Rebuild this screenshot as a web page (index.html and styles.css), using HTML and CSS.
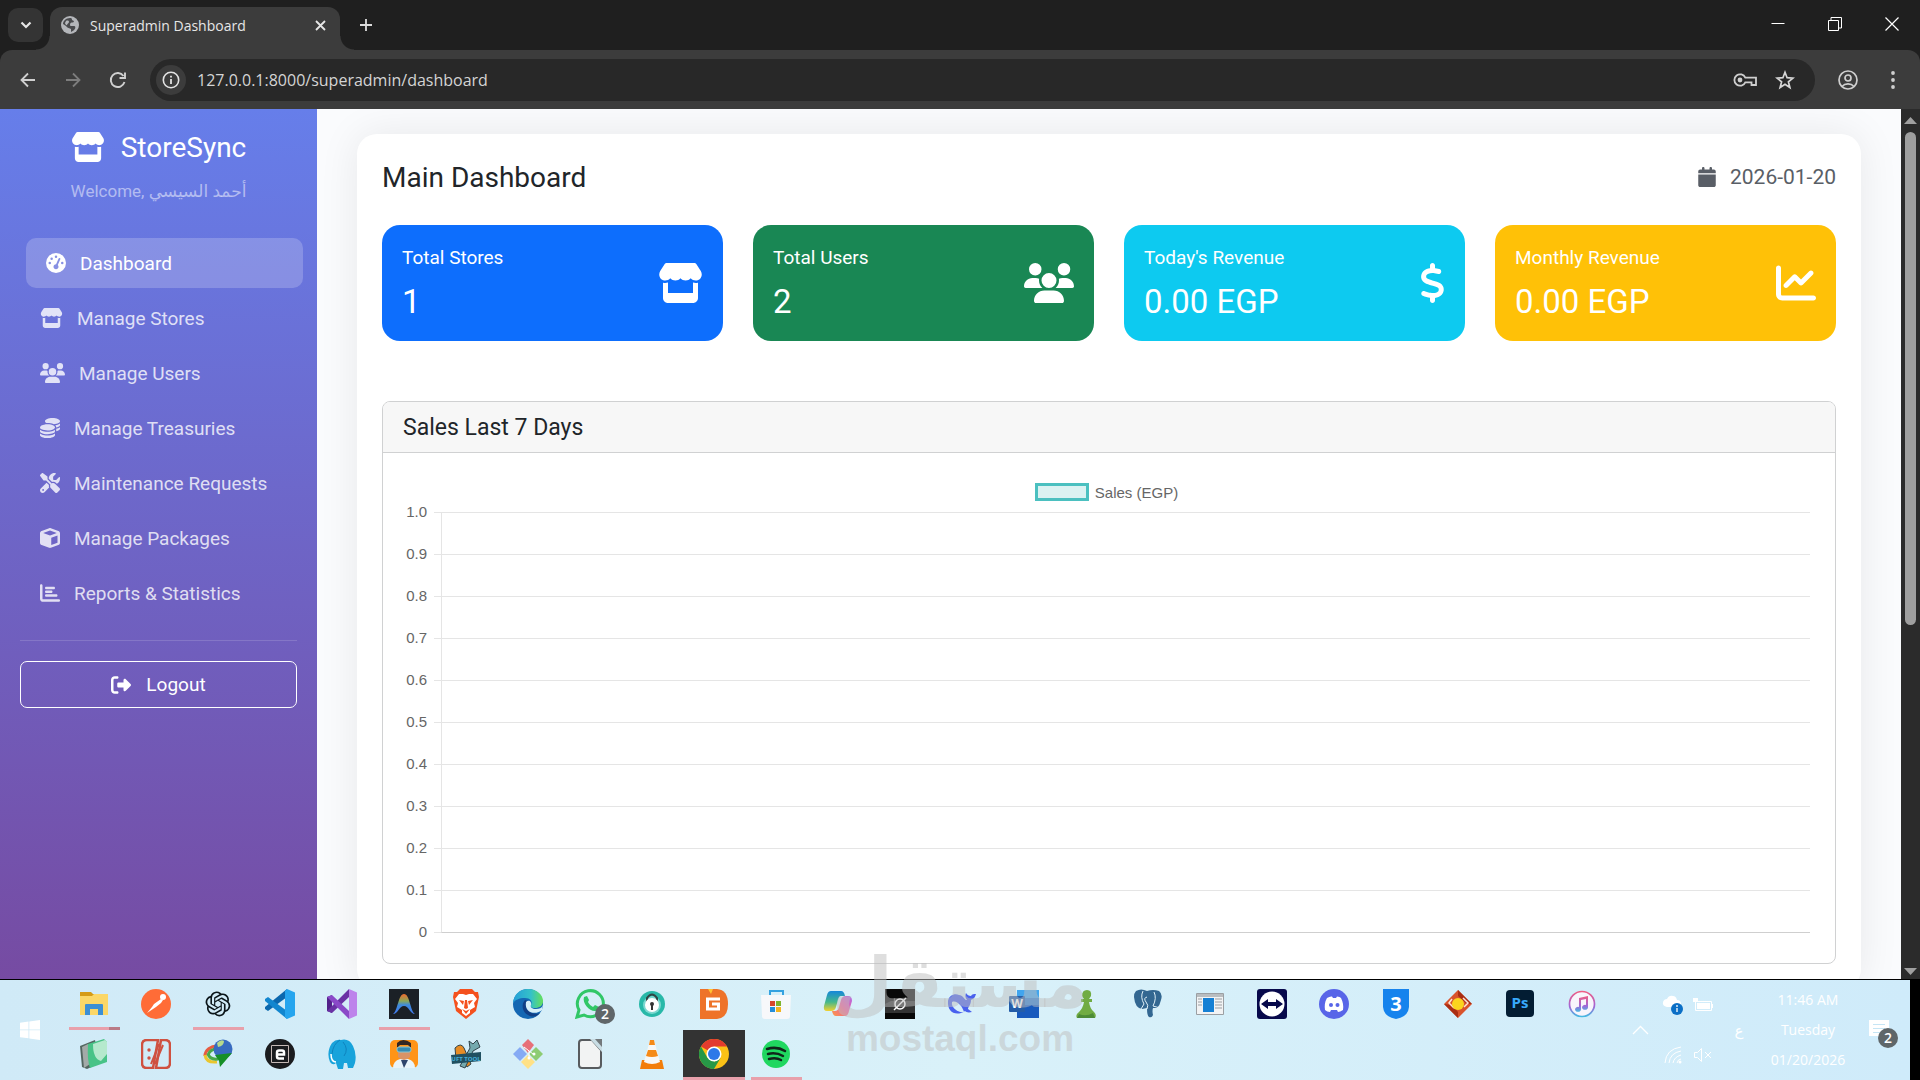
FILE: index.html
```html
<!DOCTYPE html>
<html lang="en">

<head>
    <meta charset="UTF-8">
    <meta name="viewport" content="width=device-width, initial-scale=1.0">
    <title>Superadmin Dashboard</title>
    <link rel="stylesheet" href="styles.css">
</head>

<body>

    <!-- shared icons -->
    <svg class="sprite" aria-hidden="true">
        <symbol id="store" viewBox="0 0 576 512"><path d="M547.6 103.8L490.3 13.1C485.2 5 476.1 0 466.4 0H109.6C99.9 0 90.8 5 85.7 13.1L28.3 103.8c-29.6 46.8-3.4 111.9 51.9 119.4c4 .5 8.1 .8 12.1 .8c26.1 0 49.3-11.4 65.2-29c15.9 17.6 39.1 29 65.2 29c26.1 0 49.3-11.4 65.2-29c15.9 17.6 39.1 29 65.2 29c26.2 0 49.3-11.4 65.2-29c16 17.6 39.1 29 65.2 29c4.1 0 8.1-.3 12.1-.8c55.5-7.4 81.8-72.5 52.1-119.4zM499.7 254.9l-.1 0c-5.3 .7-10.7 1.1-16.2 1.1c-12.4 0-24.3-1.9-35.4-5.3V384H128V250.6c-11.2 3.5-23.2 5.4-35.6 5.4c-5.5 0-11-.4-16.3-1.1l-.1 0c-4.1-.6-8.1-1.3-12-2.3V384v64c0 35.3 28.7 64 64 64H448c35.3 0 64-28.7 64-64V384 252.6c-4 1-8 1.8-12.3 2.3z"/></symbol>
        <symbol id="users" viewBox="0 0 640 512"><path d="M144 0a80 80 0 1 1 0 160A80 80 0 1 1 144 0zM512 0a80 80 0 1 1 0 160A80 80 0 1 1 512 0zM0 298.7C0 239.8 47.8 192 106.7 192h42.7c15.9 0 31 3.5 44.6 9.7c-1.3 7.2-1.9 14.7-1.9 22.3c0 38.2 16.8 72.5 43.3 96c-.2 0-.4 0-.7 0H21.3C9.6 320 0 310.4 0 298.7zM405.3 320c-.2 0-.4 0-.7 0c26.6-23.5 43.3-57.8 43.3-96c0-7.6-.7-15-1.9-22.3c13.6-6.3 28.7-9.7 44.6-9.7h42.7C592.2 192 640 239.8 640 298.7c0 11.8-9.6 21.3-21.3 21.3H405.3zM224 224a96 96 0 1 1 192 0 96 96 0 1 1 -192 0zM128 485.3C128 411.7 187.7 352 261.3 352H378.7C452.3 352 512 411.7 512 485.3c0 14.7-11.9 26.7-26.7 26.7H154.7c-14.7 0-26.7-11.9-26.7-26.7z"/></symbol>
    </svg>

    <header class="browser">
        <div class="tabstrip">
            <button class="tab-search" aria-label="Search tabs"><svg width="12" height="8" viewBox="0 0 12 8"><path d="M1.500 1.500 6 6l4.500-4.500" fill="none" stroke="#e6e6e6" stroke-width="2.200"/></svg></button>
            <div class="tab">
                <svg width="18" height="18" viewBox="0 0 18 18"><circle cx="9" cy="9" r="9" fill="#b4b6ba"/><path d="M9 2c3 0 1 2 3 2.500 1.500.5 1 2-.5 2S9 7 9 9s3 .5 4.500 1 1 3-1 4.500L10 16v-3c-1-1-4-1-5-3L2 8c0-3 3-6 7-6z" fill="#494a4d"/><path d="M5 5c2-1 3 0 3 1S6 8 6 9 4 8 4 7z" fill="#b4b6ba"/></svg>
                <span class="tab-title">Superadmin Dashboard</span>
                <button class="tab-close" aria-label="Close tab"><svg width="11" height="11" viewBox="0 0 11 11"><path d="M1 1l9 9M10 1l-9 9" stroke="#e6e6e6" stroke-width="1.800"/></svg></button>
            </div>
            <button class="tab-new" aria-label="New tab"><svg width="14" height="14" viewBox="0 0 14 14"><path d="M7 1v12M1 7h12" stroke="#dcdcdc" stroke-width="1.800"/></svg></button>
            <div class="window-controls">
                <button aria-label="Minimize"><svg width="14" height="14" viewBox="0 0 14 14"><path d="M.5 6.500h13" stroke="#fff"/></svg></button>
                <button aria-label="Restore"><svg width="14" height="14" viewBox="0 0 14 14"><path d="M.5 3.500h10v10H.5zM3 3V.5h10.500V11H11" fill="none" stroke="#fff"/></svg></button>
                <button aria-label="Close"><svg width="14" height="14" viewBox="0 0 14 14"><path d="M.5.5l13 13M13.500.5l-13 13" stroke="#fff" stroke-width="1.200"/></svg></button>
            </div>
        </div>
        <div class="toolbar">
            <button class="tool" aria-label="Back"><svg width="16" height="16" viewBox="0 0 16 16"><path d="M15 8H2M8 1.500 1.500 8 8 14.500" fill="none" stroke="#d0d0d0" stroke-width="1.800"/></svg></button>
            <button class="tool" aria-label="Forward"><svg width="16" height="16" viewBox="0 0 16 16"><path d="M1 8h13M8 1.500 14.500 8 8 14.500" fill="none" stroke="#7d7d7d" stroke-width="1.800"/></svg></button>
            <button class="tool" aria-label="Reload"><svg width="18" height="18" viewBox="0 0 18 18"><path d="M15.500 11A7 7 0 1 1 14.500 5M16 1.500V7h-5.500" fill="none" stroke="#d0d0d0" stroke-width="1.900"/></svg></button>
            <div class="omnibox">
                <button class="site-info" aria-label="Site information"><svg width="18" height="18" viewBox="0 0 18 18"><circle cx="9" cy="9" r="7.700" fill="none" stroke="#e3e3e3" stroke-width="1.600"/><path d="M9 8v5M9 4.700v1.900" stroke="#e3e3e3" stroke-width="1.800"/></svg></button>
                <input class="url" type="text" aria-label="Address" value="127.0.0.1:8000/superadmin/dashboard">
                <button class="tool" aria-label="Passwords"><svg width="24" height="14" viewBox="0 0 24 14"><path d="M12.300 4.700H23V12h-4.500V9.300h-6.200a5.700 5.700 0 1 1 0-4.600z" fill="none" stroke="#cfcfcf" stroke-width="1.800"/><circle cx="7" cy="7" r="2.400" fill="#cfcfcf"/></svg></button>
                <button class="tool" aria-label="Bookmark"><svg width="20" height="20" viewBox="0 0 20 20"><path d="M10 2.300l2.100 5.400 5.800.4-4.500 3.700 1.500 5.700L10 14.300l-4.900 3.200 1.500-5.700L2.100 8.100l5.800-.4z" fill="none" stroke="#d6d6d6" stroke-width="1.700"/></svg></button>
            </div>
            <button class="tool" aria-label="Profile"><svg width="20" height="20" viewBox="0 0 20 20"><g fill="none" stroke="#cfcfcf" stroke-width="1.700"><circle cx="10" cy="10" r="9"/><circle cx="10" cy="8" r="3"/><path d="M4 16.500c3-3.500 9-3.500 12 0"/></g></svg></button>
            <button class="tool" aria-label="Menu"><svg width="4" height="18" viewBox="0 0 4 18"><g fill="#cfcfcf"><circle cx="2" cy="2" r="1.900"/><circle cx="2" cy="9" r="1.900"/><circle cx="2" cy="16" r="1.900"/></g></svg></button>
        </div>
    </header>

    <div class="page">
        <aside class="sidebar">
            <div class="brand"><svg width="34" height="30"><use href="#store"/></svg><span>StoreSync</span></div>
            <p class="welcome">Welcome, <span dir="rtl">أحمد السيسي</span></p>
            <nav>
                <a href="#" class="nav-link active"><svg width="20" height="20" viewBox="0 0 512 512"><path d="M0 256a256 256 0 1 1 512 0A256 256 0 1 1 0 256zM288 96a32 32 0 1 0 -64 0 32 32 0 1 0 64 0zM256 416c35.300 0 64-28.700 64-64c0-17.400-6.900-33.100-18.100-44.600L366 161.700c5.300-12.100-.2-26.300-12.300-31.600s-26.300 .2-31.600 12.300L257.900 288c-.6 0-1.300 0-1.900 0c-35.300 0-64 28.700-64 64s28.700 64 64 64zM176 144a32 32 0 1 0 -64 0 32 32 0 1 0 64 0zM96 288a32 32 0 1 0 0-64 32 32 0 1 0 0 64zm352-32a32 32 0 1 0 -64 0 32 32 0 1 0 64 0z"/></svg>Dashboard</a>
                <a href="#" class="nav-link"><svg width="23" height="20"><use href="#store"/></svg>Manage Stores</a>
                <a href="#" class="nav-link"><svg width="25" height="20"><use href="#users"/></svg>Manage Users</a>
                <a href="#" class="nav-link"><svg width="20" height="20" viewBox="0 0 512 512"><path d="M512 80c0 18-14.300 34.600-38.400 48c-29.100 16.100-72.500 27.500-122.300 30.900c-3.700-1.800-7.400-3.500-11.300-5C300.600 137.400 248.200 128 192 128c-8.300 0-16.400 .2-24.500 .6l-1.100-.6C142.300 114.600 128 98 128 80c0-44.200 86-80 192-80S512 35.800 512 80zM160.700 161.100c10.200-.7 20.700-1.100 31.300-1.100c62.200 0 117.400 12.300 152.500 31.400C369.300 204.900 384 221.700 384 240c0 4-.7 7.900-2.100 11.700c-4.600 13.200-17 25.300-35 35.500c-.4 .2-.8 .4-1.300 .7c-35 19.400-90.800 32-153.600 32c-59.600 0-112.900-11.300-148.200-29.100c-1.900-.9-3.700-1.900-5.500-2.900C14.300 274.600 0 258 0 240c0-34.800 53.400-64.500 128-75.400c10.500-1.500 21.400-2.700 32.700-3.500zM416 240c0-21.900-10.600-39.900-24.100-53.400c28.300-4.400 54.200-11.400 76.200-20.500c16.300-6.800 31.500-15.200 43.900-25.500V176c0 19.300-16.500 37.100-43.800 50.900c-14.600 7.400-32.400 13.700-52.400 18.500c.1-1.800 .2-3.500 .2-5.300zm-32 96c0 18-14.300 34.600-38.400 48c-1.800 1-3.600 1.900-5.500 2.900C304.900 404.700 251.600 416 192 416c-62.800 0-118.600-12.600-153.600-32C14.300 370.600 0 354 0 336V300.600c12.500 10.300 27.600 18.700 43.900 25.500C83.400 342.600 135.800 352 192 352s108.600-9.400 148.100-25.900c7.800-3.200 15.300-6.900 22.400-10.900c6.100-3.400 11.800-7.200 17.200-11.200c1.500-1.100 2.900-2.300 4.300-3.400V336zm32 0V278.100c19-4.200 36.500-9.500 52.100-16c16.300-6.800 31.500-15.200 43.900-25.500V272c0 10.500-5 21-14.900 30.900c-16.300 16.300-45 29.700-81.300 38.400c.1-1.700 .2-3.500 .2-5.300zM192 448c56.200 0 108.600-9.400 148.100-25.900c16.300-6.800 31.500-15.200 43.900-25.500V432c0 44.200-86 80-192 80S0 476.200 0 432V396.600c12.500 10.300 27.600 18.700 43.900 25.500C83.400 438.600 135.800 448 192 448z"/></svg>Manage Treasuries</a>
                <a href="#" class="nav-link"><svg width="20" height="20" viewBox="0 0 512 512"><path d="M78.600 5C69.100-2.400 55.600-1.500 47 7L7 47c-8.500 8.500-9.400 22-2.100 31.600l80 104c4.500 5.900 11.600 9.400 19 9.400h54.100l109 109c-14.700 29-10 65.400 14.300 89.600l112 112c12.500 12.500 32.800 12.500 45.300 0l64-64c12.500-12.500 12.500-32.800 0-45.300l-112-112c-24.200-24.200-60.600-29-89.600-14.300l-109-109V104c0-7.500-3.500-14.500-9.400-19L78.600 5zM19.900 396.100C7.200 408.800 0 426.100 0 444.100C0 481.600 30.400 512 67.900 512c18 0 35.300-7.200 48-19.900L233.700 374.300c-7.800-20.900-9-43.600-3.600-65.100l-61.700-61.700L19.900 396.100zM512 144c0-10.500-1.100-20.700-3.200-30.500c-2.400-11.200-16.100-14.100-24.200-6l-63.900 63.900c-3 3-7.100 4.700-11.300 4.700H352c-8.800 0-16-7.200-16-16V102.600c0-4.200 1.700-8.300 4.700-11.300l63.900-63.900c8.100-8.100 5.200-21.800-6-24.200C388.700 1.100 378.500 0 368 0C288.500 0 224 64.500 224 144l0 .8 85.300 85.300c36-9.100 75.800 .5 104 28.700L429 274.500c49-23 83-72.800 83-130.500zM56 432a24 24 0 1 1 48 0 24 24 0 1 1 -48 0z"/></svg>Maintenance Requests</a>
                <a href="#" class="nav-link"><svg width="20" height="20" viewBox="0 0 512 512"><path d="M234.500 5.700c13.900-5 29.100-5 43.100 0l192 68.600C495 83.400 512 107.500 512 134.600V377.400c0 27-17 51.200-42.500 60.300l-192 68.600c-13.900 5-29.100 5-43.100 0l-192-68.600C17 428.600 0 404.500 0 377.400V134.600c0-27 17-51.200 42.500-60.300l192-68.600zM256 66L82.300 128 256 190l173.700-62L256 66zm32 368.600l160-57.100v-188L288 246.600v188z"/></svg>Manage Packages</a>
                <a href="#" class="nav-link"><svg width="20" height="20" viewBox="0 0 512 512"><path d="M32 32c17.700 0 32 14.300 32 32V400c0 8.800 7.200 16 16 16H480c17.700 0 32 14.300 32 32s-14.300 32-32 32H80c-44.200 0-80-35.800-80-80V64C0 46.300 14.300 32 32 32zm96 96c0-17.700 14.300-32 32-32l192 0c17.700 0 32 14.300 32 32s-14.300 32-32 32H160c-17.700 0-32-14.300-32-32zm32 64H288c17.700 0 32 14.300 32 32s-14.300 32-32 32H160c-17.700 0-32-14.300-32-32s14.300-32 32-32zm0 96H416c17.700 0 32 14.300 32 32s-14.300 32-32 32H160c-17.700 0-32-14.300-32-32s14.300-32 32-32z"/></svg>Reports &amp; Statistics</a>
            </nav>
            <hr>
            <button class="logout"><svg width="20" height="20" viewBox="0 0 512 512"><path d="M377.900 105.900L500.700 228.700c7.200 7.200 11.300 17.100 11.300 27.300s-4.100 20.100-11.300 27.300L377.900 406.100c-6.400 6.400-15 9.900-24 9.900c-18.700 0-33.900-15.200-33.900-33.900l0-62.100-128 0c-17.700 0-32-14.300-32-32l0-64c0-17.700 14.300-32 32-32l128 0 0-62.100c0-18.700 15.200-33.900 33.900-33.900c9 0 17.600 3.600 24 9.900zM160 96L96 96c-17.700 0-32 14.300-32 32l0 256c0 17.700 14.300 32 32 32l64 0c17.700 0 32 14.300 32 32s-14.300 32-32 32l-64 0c-53 0-96-43-96-96L0 128C0 75 43 32 96 32l64 0c17.700 0 32 14.300 32 32s-14.300 32-32 32z"/></svg>Logout</button>
        </aside>

        <main class="main">
            <div class="content">
                <div class="content-head">
                    <h1>Main Dashboard</h1>
                    <div class="date"><svg width="18" height="20" viewBox="0 0 448 512"><path d="M96 32V64H48C21.500 64 0 85.500 0 112v48H448V112c0-26.500-21.500-48-48-48H352V32c0-17.700-14.300-32-32-32s-32 14.300-32 32V64H160V32c0-17.700-14.300-32-32-32S96 14.300 96 32zM448 192H0V464c0 26.500 21.500 48 48 48H400c26.500 0 48-21.500 48-48V192z"/></svg>2026-01-20</div>
                </div>

                <div class="stats">
                    <div class="stat blue">
                        <div><h2>Total Stores</h2><p>1</p></div>
                        <svg width="45" height="40"><use href="#store"/></svg>
                    </div>
                    <div class="stat green">
                        <div><h2>Total Users</h2><p>2</p></div>
                        <svg width="50" height="40"><use href="#users"/></svg>
                    </div>
                    <div class="stat cyan">
                        <div><h2>Today's Revenue</h2><p>0.00 EGP</p></div>
                        <svg width="25" height="40" viewBox="0 0 320 512"><path d="M160 0c17.700 0 32 14.300 32 32V67.700c1.600 .2 3.100 .4 4.700 .7c.4 .1 .7 .1 1.100 .2l48 8.800c17.400 3.200 28.900 19.900 25.700 37.200s-19.900 28.900-37.200 25.700l-47.500-8.700c-31.300-4.600-58.900-1.500-78.300 6.200s-27.200 18.300-29 28.100c-2 10.700-.5 16.700 1.200 20.400c1.800 3.900 5.500 8.300 12.800 13.200c16.300 10.700 41.300 17.700 73.700 26.300l2.900 .8c28.600 7.600 63.600 16.800 89.600 33.800c14.200 9.300 27.600 21.900 35.900 39.500c8.500 17.900 10.300 37.900 6.400 59.200c-6.900 38-33.100 63.400-65.600 76.700c-13.700 5.600-28.600 9.200-44.400 11V480c0 17.700-14.300 32-32 32s-32-14.300-32-32V445.100c-.4-.1-.9-.1-1.300-.2c-24.400-3.800-64.500-14.300-91.500-26.300c-16.100-7.200-23.400-26.100-16.200-42.200s26.100-23.400 42.200-16.200c20.900 9.300 55.300 18.500 75.200 21.600c31.900 4.700 58.200 2 76-5.300c16.900-6.900 24.600-16.900 26.800-28.900c1.900-10.600 .4-16.700-1.300-20.400c-1.900-4-5.600-8.400-13-13.300c-16.400-10.700-41.500-17.700-74-26.300l-2.800-.7C119.400 279.300 84.400 270 58.400 253c-14.200-9.300-27.500-22-35.800-39.600c-8.400-17.900-10.100-37.900-6.100-59.200C23.700 116 52.300 91.200 84.800 78.300c13.300-5.300 27.900-8.900 43.200-11V32c0-17.700 14.300-32 32-32z"/></svg>
                    </div>
                    <div class="stat yellow">
                        <div><h2>Monthly Revenue</h2><p>0.00 EGP</p></div>
                        <svg width="40" height="40" viewBox="0 0 512 512"><path d="M64 64c0-17.700-14.300-32-32-32S0 46.300 0 64V400c0 44.200 35.800 80 80 80H480c17.700 0 32-14.300 32-32s-14.300-32-32-32H80c-8.800 0-16-7.200-16-16V64zm406.600 86.600c12.500-12.500 12.500-32.800 0-45.300s-32.800-12.500-45.300 0L320 210.700l-57.400-57.400c-12.500-12.500-32.800-12.500-45.300 0l-112 112c-12.500 12.500-12.500 32.800 0 45.300s32.800 12.500 45.300 0L240 221.300l57.400 57.400c12.500 12.500 32.800 12.500 45.300 0l128-128z"/></svg>
                    </div>
                </div>

                <section class="chart-card">
                    <h2 class="chart-title">Sales Last 7 Days</h2>
                    <div class="chart">
                        <div class="legend"><span class="legend-box"></span>Sales (EGP)</div>
                        <div class="plot-row">
                            <div class="y-labels">
                                <span>1.0</span><span>0.9</span><span>0.8</span><span>0.7</span><span>0.6</span><span>0.5</span><span>0.4</span><span>0.3</span><span>0.2</span><span>0.1</span><span>0</span>
                            </div>
                            <div class="plot"><div class="plot-area"></div></div>
                        </div>
                    </div>
                </section>
            </div>
        </main>

        <div class="scrollbar">
            <svg width="13" height="7" viewBox="0 0 13 7"><path d="M6.500 0 13 7H0z" fill="#a0a0a0"/></svg>
            <div class="thumb-track"><div class="thumb"></div></div>
            <svg width="13" height="7" viewBox="0 0 13 7"><path d="M0 0h13L6.500 7z" fill="#a0a0a0"/></svg>
        </div>
    </div>

    <footer class="taskbar">
        <button class="start" aria-label="Start"><svg width="20" height="20" viewBox="0 0 20 20"><path d="M0 2.700 8.500 1.500v8H0zM9.300 1.400 20 0v9.500H9.300zM0 10.300h8.500v8L0 17.200zM9.300 10.300H20V20L9.300 18.500z" fill="#fff"/></svg></button>

        <div class="apps">
            <button class="app open more" aria-label="File Explorer"><svg viewBox="0 0 30 30"><path d="M1 3h11l2 2h13v3H1z" fill="#d59b16"/><path d="M1 7h12l2-2h14v21H1z" fill="#fbd767"/><path d="M6 26V16q0-1 1-1h16q1 0 1 1v10h-5v-6h-8v6z" fill="#3c8fd4"/></svg></button>
            <button class="app" aria-label="Postman"><svg viewBox="0 0 30 30"><circle cx="15" cy="15" r="15" fill="#ff6c37"/><circle cx="22" cy="8" r="3" fill="#fff"/><path d="M20 10 13 15l-2 3-5 6 6-4 3-2 5-4 2-3z" fill="#fff"/></svg></button>
            <button class="app open" aria-label="ChatGPT"><svg viewBox="0 0 24 24"><path transform="translate(2 2) scale(.83)" fill="#0b1519" d="M22.282 9.821a5.985 5.985 0 0 0-.516-4.910 6.046 6.046 0 0 0-6.510-2.900A6.065 6.065 0 0 0 4.981 4.182a5.985 5.985 0 0 0-3.998 2.900 6.046 6.046 0 0 0 .743 7.097 5.980 5.980 0 0 0 .511 4.911 6.051 6.051 0 0 0 6.515 2.900A5.985 5.985 0 0 0 13.260 24a6.056 6.056 0 0 0 5.772-4.206 5.990 5.990 0 0 0 3.998-2.900 6.056 6.056 0 0 0-.747-7.073zM13.260 22.430a4.476 4.476 0 0 1-2.876-1.040l.141-.081 4.779-2.758a.795.795 0 0 0 .393-.681v-6.737l2.020 1.169a.071.071 0 0 1 .038.052v5.583a4.504 4.504 0 0 1-4.495 4.494zM3.600 18.304a4.470 4.470 0 0 1-.535-3.014l.142.085 4.783 2.759a.771.771 0 0 0 .781 0l5.843-3.369v2.332a.080.080 0 0 1-.033.062L9.740 19.950a4.500 4.500 0 0 1-6.140-1.646zM2.341 7.896a4.485 4.485 0 0 1 2.366-1.973V11.600a.766.766 0 0 0 .388.677l5.815 3.354-2.020 1.169a.076.076 0 0 1-.071 0l-4.830-2.787A4.504 4.504 0 0 1 2.340 7.872zm16.597 3.855-5.833-3.387L15.119 7.200a.076.076 0 0 1 .071 0l4.830 2.791a4.494 4.494 0 0 1-.676 8.105v-5.678a.790.790 0 0 0-.407-.667zm2.010-3.023-.141-.085-4.774-2.782a.776.776 0 0 0-.785 0L9.409 9.230V6.897a.066.066 0 0 1 .028-.061l4.830-2.787a4.500 4.500 0 0 1 6.680 4.660zM8.307 12.863l-2.020-1.164a.080.080 0 0 1-.038-.057V6.075a4.500 4.500 0 0 1 7.375-3.453l-.142.080-4.778 2.758a.795.795 0 0 0-.393.681zm1.097-2.365 2.602-1.500 2.607 1.500v2.999l-2.597 1.500-2.607-1.500z"/></svg></button>
            <button class="app" aria-label="Visual Studio Code"><svg viewBox="0 0 30 30"><path d="M22 0v8L3 22 0 20v-2z" fill="#0b68ae"/><path d="M3 8 22 22v8L0 12v-2z" fill="#1286cf"/><path d="M22 0l8 3.500v23L22 30l-2-2V2z" fill="#26a5ee"/></svg></button>
            <button class="app" aria-label="Visual Studio"><svg viewBox="0 0 30 30"><path d="M0 8 5 6v18l-5-2z" fill="#52218a"/><path d="M22 0v8L5 24l-5-2z" fill="#6a32a5"/><path d="M5 6 22 22v8L0 8z" fill="#8a49c8"/><path d="M22 0l8 3.500v23L22 30z" fill="#bd83eb"/></svg></button>
            <button class="app open" aria-label="Antigravity"><svg viewBox="0 0 30 30"><defs><linearGradient id="arch" x2="0" y2="1"><stop offset="0" stop-color="#f16a2c"/><stop offset=".35" stop-color="#8aa858"/><stop offset=".55" stop-color="#3e8bdc"/><stop offset="1" stop-color="#4378ec"/></linearGradient></defs><path fill="#1b2026" d="M0 0h30v30H0z"/><path d="M4 25C9 22 9 5 15 5s6 17 11 20c-5 0-6-8-11-8S9 25 4 25z" fill="url(#arch)"/></svg></button>
            <button class="app" aria-label="Brave"><svg viewBox="0 0 30 30"><path d="M9 0h12l3 3 3 0 1 5-3 14-10 8-10-8L2 8l1-5h3z" fill="#f4511e"/><path d="M8 5h4l3 1 3-1h4l4 5-3 4 1 4-5 3v3l-4 3-4-3v-3l-5-3 1-4-3-4z" fill="#fff"/><path d="M8 11l5 1-1 4zM22 11l-5 1 1 4zM14 11h2l1 8-2 1-2-1zM11 20l4 2 4-2-4 5z" fill="#f4511e"/></svg></button>
            <button class="app" aria-label="Microsoft Edge"><svg viewBox="0 0 30 30"><defs><linearGradient id="edge"><stop offset="0" stop-color="#249ed8"/><stop offset=".6" stop-color="#35c1c8"/><stop offset="1" stop-color="#66e05a"/></linearGradient></defs><circle cx="15" cy="15" r="15" fill="#1467b3"/><path d="M0 14C1 5 7 0 15 0c9 0 15 6 15 12 0 5-4 7-8 7-4 0-5-2-4-3 2-4-1-7-6-7C6 9 2 11 0 14z" fill="url(#edge)"/><path d="M12 11c-4 4-3 12 3 15 5 3 10 1 12-2 0 0-8 3-12-3-3-4-1-8 0-9z" fill="#103f86"/><path d="M13 13c3-3 6 0 5 3-1 2 1 4 5 4 3 0 6-1 7-4l-1 5c-5 5-18 4-16-8z" fill="#d6eff9"/></svg></button>
            <button class="app" aria-label="WhatsApp"><svg viewBox="0 0 30 30"><path d="M2 28 4 21A13 13 0 1 1 9 26z" fill="none" stroke="#31c767" stroke-width="3"/><path d="M9 8l3-1 2 4-1 2c1 2 3 4 5 5l2-2 4 2c0 3-2 4-4 4C14 22 7 14 9 8z" fill="#31c767"/></svg><span class="badge">2</span></button>
            <button class="app" aria-label="Password manager"><svg viewBox="0 0 30 30"><circle cx="15" cy="15" r="13" fill="#28b8a8"/><circle cx="15" cy="16" r="9" fill="#7bd8d0"/><path d="M10 13V9q5-7 10 0v4" fill="none" stroke="#344" stroke-width="2"/><circle cx="15" cy="16" r="7" fill="#fff"/><circle cx="15" cy="15" r="2" fill="#333"/><path d="M14 15h2v6h-2z" fill="#333"/></svg></button>
            <button class="app" aria-label="DiskGenius"><svg viewBox="0 0 30 30"><path d="M1 0h17q11 1 11 15T18 30H1z" fill="#ee7329"/><path d="M21 10H8.500v10h11v-5H13" fill="none" stroke="#fff" stroke-width="3"/><path d="M9 0h5l-2 5z" fill="#ffc332"/></svg></button>
            <button class="app" aria-label="Microsoft Store"><svg viewBox="0 0 30 30"><path d="M9 7V2h13v5" fill="none" stroke="#35a2e0" stroke-width="2"/><path d="M0 6h30l-1 21q0 3-3 3H4q-3 0-3-3z" fill="#f7f8fa"/><path fill="#d8472b" d="M9 12h5v5H9z"/><path fill="#7fb52c" d="M15 12h5v5h-5z"/><path fill="#248edb" d="M9 18h5v5H9z"/><path fill="#f3b520" d="M15 18h5v5h-5z"/></svg></button>
            <button class="app" aria-label="Copilot"><svg viewBox="0 0 30 30"><defs><linearGradient id="cop1" x2="0" y2="1"><stop offset="0" stop-color="#1687da"/><stop offset=".55" stop-color="#45b88c"/><stop offset="1" stop-color="#f3d12e"/></linearGradient><linearGradient id="cop2" x1="1" x2="0" y2="1"><stop offset="0" stop-color="#b06be8"/><stop offset=".5" stop-color="#f0609a"/><stop offset="1" stop-color="#fa9a45"/></linearGradient></defs><path d="M8 2h10q3 0 4 5h-4q-2 0-3 4l-2 7q-1 4-5 4H4q-4 0-3-5L4 6q1-4 4-4z" fill="url(#cop1)"/><path d="M22 27H13q-3 0-4-5h3q3 0 4-4l2-7q1-4 5-4h2q4 0 4 5l-3 10q-1 5-4 5z" fill="url(#cop2)"/></svg></button>
            <button class="app" aria-label="Grok"><svg viewBox="0 0 30 30"><path fill="#080808" d="M0 0h30v30H0z"/><path fill="#333" d="M6 12h24v12H0v-9l6-3z"/><circle cx="15" cy="15" r="5" fill="none" stroke="#fff" stroke-width="1.500"/><path d="M9 21 21 9" stroke="#fff" stroke-width="1.500"/></svg></button>
            <button class="app" aria-label="DeepSeek"><svg viewBox="0 0 30 30"><path d="M1 12c1-6 7-8 11-6 4 0 6 6 8 5-2-2-2-5-1-7 1 2 3 3 5 3 1-2 3-2 5-2-1 4-3 5-5 6 0 5-3 7-3 9l4 3c-4 1-6 0-7-1C9 28 0 23 1 12z" fill="#4961ee"/><path d="M5 13c5-2 10 4 12 10-6 1-13-4-12-10z" fill="#d8effa"/></svg></button>
            <button class="app" aria-label="Word"><svg viewBox="0 0 30 30"><path fill="#41a5ee" d="M8 1h22v10H8z"/><path fill="#2b7cd3" d="M8 9h22v7H8z"/><path fill="#185abd" d="M8 16h22v13H8z"/><rect y="7" width="16" height="16" rx="1" fill="#245da8"/><text x="8" y="19" class="icon-text" font-size="12">W</text></svg></button>
            <button class="app" aria-label="Chess"><svg viewBox="0 0 30 30"><path d="M10 10h3l-2-3q0-6 5-6t4 6l-2 3h3v3h-3q1 7 5 10 3 3 1 6H6q-2-3 2-6 4-4 5-10h-3z" fill="#71ac43"/><path d="M8 25q7 3 14-1l2 5H6z" fill="#4d8b37"/></svg></button>
            <button class="app" aria-label="PostgreSQL"><svg viewBox="0 0 30 30"><path d="M3 2q5-3 11 0 6-2 12 0 4 3 2 9-1 5-4 8l-4 0q-1 3 0 7-1 3-4 2-2-1-2-9l-5 1Q2 19 1 8q0-4 2-6z" fill="#336791"/><path d="M10 2q-3 6 1 13l-3 5M21 3q3 6-1 14l7 2M14 20q2-4-1-7-3-4 1-5" fill="none" stroke="#e1f1f8"/></svg></button>
            <button class="app" aria-label="Window manager"><svg viewBox="0 0 30 30"><path fill="#f2f3f4" stroke="#9b9fa3" d="M1.500 4.500h27v21h-27z"/><path fill="#b9bdc0" d="M2 5h26v3H2z"/><path fill="#1680d4" d="M8 9h11v14H8z"/><path d="M20 10h7M20 13h7M20 16h7M20 19h7M3 10h4M3 13h4M3 16h4" stroke="#9b9fa3"/></svg></button>
            <button class="app" aria-label="TeamViewer"><svg viewBox="0 0 30 30"><rect width="30" height="30" rx="3" fill="#07094b"/><circle cx="15" cy="15" r="12.500" fill="#fff"/><path d="M4 15l7-5v3h8v-3l7 5-7 5v-3h-8v3z" fill="#07094b"/></svg></button>
            <button class="app" aria-label="Discord"><svg viewBox="0 0 30 30"><circle cx="15" cy="15" r="15" fill="#5865e8"/><path d="M8 9q3-2 5-1.500l1 1.500h3l1-1.500q3 0 4 1.500 3 6 2 12-3 2-5 2l-1-2h-6l-1 2q-3 0-5-2-1-7 2-12z" fill="#fff"/><circle cx="12" cy="16" r="2" fill="#5865e8"/><circle cx="18.500" cy="16" r="2" fill="#5865e8"/></svg></button>
            <button class="app" aria-label="3uTools"><svg viewBox="0 0 30 30"><path d="M2 0h26v18q-1 10-13 12Q3 28 2 18z" fill="#1683ed"/><text x="15" y="22" class="icon-text" font-size="20">3</text></svg></button>
            <button class="app" aria-label="SmartGit"><svg viewBox="0 0 30 30"><path d="M15 1 29 15 15 29 1 15z" fill="#d9532c"/><path d="M1 15 15 29v-6l-6-7zM15 1l14 14h-5l-9-8z" fill="#a92e14"/><path d="M9 10 6 14l5 5M20 9l5 5-4 4" stroke="#ffe3d4" stroke-width="1.500" fill="none"/><circle cx="15" cy="15" r="6" fill="#fbd51e"/></svg></button>
            <button class="app" aria-label="Photoshop"><svg viewBox="0 0 30 30"><rect x="1" y="1" width="28" height="27" rx="4" fill="#031d33"/><text x="15" y="19" class="icon-text ps" font-size="15">Ps</text></svg></button>
            <button class="app" aria-label="iTunes"><svg viewBox="0 0 30 30"><defs><linearGradient id="tune" x2="0" y2="1"><stop offset="0" stop-color="#ef5c83"/><stop offset=".6" stop-color="#a266d6"/><stop offset="1" stop-color="#46b8e2"/></linearGradient></defs><circle cx="15" cy="15" r="12.500" fill="#f8f5fc" stroke="url(#tune)" stroke-width="1.700"/><path d="M12 9l9-2v11a3 2.500 0 1 1-2-2v-6l-5 1v9a3 2.500 0 1 1-2-2z" fill="url(#tune)"/></svg></button>

            <button class="app" aria-label="Notes"><svg viewBox="0 0 30 30"><path d="M1 7 16 1l5 23-13 6-5-2z" fill="#536660"/><path d="M3 8l6-3 2 20-6 4z" fill="#a3aaa8"/><path d="M9 5l16-5 3 3v20l-17 6q-3-8-2-24z" fill="#48c387"/><path d="M14 5l12-4 2 2v12l-6 7q-8-2-8-17z" fill="#b5e9cd"/></svg></button>
            <button class="app" aria-label="Proto"><svg viewBox="0 0 30 30"><path d="M17 1H6Q1 1 1 6v18q0 5 5 5h6zM20 1h4q5 0 5 5v18q0 5-5 5h-9z" fill="none" stroke="#cf5140" stroke-width="2.500"/><path d="M18 5 10 25M22 6l-8 19" stroke="#cf5140" stroke-width="2"/><circle cx="8" cy="11" r="1.700" fill="#cf5140"/><circle cx="8" cy="19" r="1.700" fill="#cf5140"/></svg></button>
            <button class="app" aria-label="Internet Download Manager"><svg viewBox="0 0 30 30"><path d="M2 17C2 11 8 7 14 7" fill="none" stroke="#e65c41" stroke-width="3"/><path d="M2 16q1 8 12 7" fill="none" stroke="#e9c62e" stroke-width="3"/><path d="M5 16q2-6 9-6M5 15q2 6 10 5" fill="none" stroke="#48a948" stroke-width="3"/><circle cx="20" cy="10" r="9.500" fill="#386bc0"/><path d="M14 4q4-4 7-2 0 5-6 6z" fill="#b7d98c"/><path d="M12 16l17-2-12 14-1-6z" fill="#158f27"/></svg></button>
            <button class="app" aria-label="Epic"><svg viewBox="0 0 30 30"><circle cx="15" cy="15" r="15" fill="#1b1c1f"/><path d="M6.500 6.500h17v17h-17z" fill="none" stroke="#c6b9b6"/><path d="M12 15.500h7v-2q0-2-2-2h-3q-2 0-2 2v4q0 2 2 2h5" fill="none" stroke="#fff" stroke-width="2.500"/></svg></button>
            <button class="app" aria-label="MAMP"><svg viewBox="0 0 30 30"><path d="M5 4q4-4 9-3 8-2 12 6 4 8 2 17l-2 5h-5l-1-5-3 0-1 6h-5l-2-6q-3 3-6-1-4-10 2-19z" fill="#18a3db"/><path d="M16 3q6 7 1 14M13 1q-7 4-8 14" fill="none" stroke="#0e83be"/><path d="M4 15q0 8 5 8" fill="none" stroke="#fff" stroke-width="1.500"/></svg></button>
            <button class="app" aria-label="Repair doctor"><svg viewBox="0 0 30 30"><rect x="1" y="1" width="28" height="28" rx="5" fill="#ff9417"/><path d="M4 29q0-7 7-9h8q7 2 7 9z" fill="#e8f4fa"/><path d="M9 9h12v9q-6 6-12 0z" fill="#d89367"/><path d="M8 9V4q6-6 14 0v5l-3-3h-8z" fill="#332723"/><rect x="8" y="8" width="14" height="5" rx="2" fill="#358bb3" stroke="#85c5d5"/><path d="M12 21l3 8 4-8z" fill="#2e456c"/></svg></button>
            <button class="app" aria-label="UFT Tool"><svg viewBox="0 0 30 30"><path d="M4 9q6-6 9 0l7 16-4 3-7-11-4 3z" fill="#e68c25" stroke="#31434a"/><path d="M18 2l4 3 4-4 3 7-7 4-8 17-5-2 10-18z" fill="#74a9ae" stroke="#31434a"/><path d="M0 16l30-3v9L1 25z" fill="#205061"/><text x="15" y="22" class="icon-text tool-text">UFT TOOL</text></svg></button>
            <button class="app" aria-label="Git"><svg viewBox="0 0 30 30"><path d="M15 0l6 6-6 8-6-8z" fill="#e76f78"/><path d="M7 8l7 7-7 7-7-7z" fill="#85aaf4"/><path d="M23 8l7 7-7 7-7-7z" fill="#8dcc73"/><path d="M15 16l7 7-7 7-7-7z" fill="#ffe186"/><path d="M11 8l9 7M16 12v7" stroke="#fff" fill="none"/><circle cx="16" cy="19" r="1.500" fill="#fff"/><circle cx="21" cy="15" r="1.500" fill="#fff"/></svg></button>
            <button class="app" aria-label="LibreOffice"><svg viewBox="0 0 30 30"><path d="M7 1h10l9 10v15q0 3-3 3H7q-3 0-3-3V4q0-3 3-3z" fill="#f2f3f3" stroke="#585b5e" stroke-width="2"/><path d="M15 0h6l6 7v6z" fill="#c9dde4"/><path d="M20 0h7v8z" fill="#73797c"/></svg></button>
            <button class="app" aria-label="VLC"><svg viewBox="0 0 30 30"><path d="M5 21h20l2 9H3z" fill="#f27d0a"/><path d="M13 1h4l6 22q-8 4-16 0z" fill="#f7f7f5"/><path d="M13 1h4l1 5h-6zM11 11h8l2 6q-6 2-12 0z" fill="#f58a17"/></svg></button>
            <button class="app current" aria-label="Google Chrome"><svg viewBox="0 0 30 30"><circle cx="15" cy="15" r="15" fill="#fbc116"/><path d="M15 15 2 7.500A15 15 0 0 1 28 7.500H15z" fill="#e33b2e"/><path d="M2 7.500 8.500 19 15 21.500V30A15 15 0 0 1 2 7.500z" fill="#279847"/><path d="M21.500 19 15 30l-3-1 5-9z" fill="#279847"/><circle cx="15" cy="15" r="7.500" fill="#fff"/><circle cx="15" cy="15" r="6" fill="#2d79e8"/></svg></button>
            <button class="app open" aria-label="Spotify"><svg viewBox="0 0 30 30"><circle cx="15" cy="15" r="14" fill="#20d760"/><path d="M6 10q10-3 18 2M7 15q8-2 15 2M8 20q7-2 12 1" fill="none" stroke="#10251a" stroke-width="2.500" stroke-linecap="round"/></svg></button>
        </div>

        <div class="tray">
            <button class="chevron" aria-label="Show hidden icons"><svg width="17" height="10" viewBox="0 0 17 10"><path d="M1 9l7.500-7.500L16 9" fill="none" stroke="#fff" stroke-width="1.300"/></svg></button>
            <div class="tray-icons">
                <svg width="22" height="22" viewBox="0 0 22 22"><path d="M5 13q-5-1-4-5 1-3 4-3 2-4 6-3 3 0 4 4 4 0 4 4t-5 3z" fill="#fff"/><circle cx="15" cy="15" r="6" fill="#0b6fc6"/><path d="M15 14v4M15 11v2" stroke="#fff" stroke-width="1.300"/></svg>
                <svg width="22" height="22" viewBox="0 0 22 22"><path d="M3.500 7.500h16v9h-16zM20.500 10v4" fill="none" stroke="#fff"/><path d="M5 9h13v6H5zM1 4h5v4H1z" fill="#fff"/></svg>
                <svg width="18" height="18" viewBox="0 0 18 18"><path d="M1 17Q2 3 17 1M5 17Q6 7 17 5M9 17q1-6 8-8M13 17q1-4 4-4" fill="none" stroke="#fff"/><circle cx="16" cy="16" r="1.500" fill="#fff"/></svg>
                <svg width="20" height="16" viewBox="0 0 20 16"><path d="M1.500 5.500h3l4-4v13l-4-4h-3zM12 5l6 6M18 5l-6 6" fill="none" stroke="#fff"/></svg>
            </div>
            <span class="lang" lang="ar">ع</span>
            <div class="clock"><span>11:46 AM</span><span>Tuesday</span><span>01/20/2026</span></div>
            <button class="notifications" aria-label="Notifications"><svg width="20" height="20" viewBox="0 0 20 20"><path d="M0 0h20v16h-4v4l-5-4H0z" fill="#fff"/><path d="M4 4.500h12M4 8.500h12M4 12.500h8" stroke="#c5e5f5"/></svg><span class="badge">2</span></button>
        </div>
    </footer>

    <div class="watermark">
        <span class="wm-arabic" lang="ar">مستقل</span>
        <span class="wm-latin">mostaql.com</span>
    </div>

</body>

</html>
```
FILE: styles.css
```css
* {
    box-sizing: border-box;
}

body {
    margin: 0;
    height: 100vh;
    display: flex;
    flex-direction: column;
    overflow: hidden;
    font-family: Roboto, 'DejaVu Sans', sans-serif;
}

h1, h2, p {
    margin: 0;
    font-weight: 400;
}

button {
    display: flex;
    align-items: center;
    justify-content: center;
    padding: 0;
    border: none;
    background: none;
    color: inherit;
    font: inherit;
}

svg {
    flex: none;
    fill: currentColor;
}

.sprite {
    display: none;
}

/* browser window */
.browser {
    background-color: #1f1f1f;
    color: #e6e6e6;
    font-family: 'Open Sans', sans-serif;
}

.tabstrip {
    display: flex;
    height: 50px;
    padding-left: 8px;
}

.tab-search {
    width: 35px;
    height: 34px;
    margin-top: 8px;
    border-radius: 10px;
    background-color: #343434;
}

.tab {
    position: relative;
    display: flex;
    align-items: center;
    width: 290px;
    height: 43px;
    margin: 7px 0 0 7px;
    padding: 0 14px 7px 11px;
    border-radius: 12px 12px 0 0;
    background-color: #3c3c3c;
}

.tab::before,
.tab::after {
    content: "";
    position: absolute;
    bottom: 0;
    width: 14px;
    height: 14px;
}

.tab::before {
    right: 100%;
    background: radial-gradient(circle at 0 0, transparent 13px, #3c3c3c 14px);
}

.tab::after {
    left: 100%;
    background: radial-gradient(circle at 100% 0, transparent 13px, #3c3c3c 14px);
}

.tab-title {
    flex: 1;
    margin-left: 11px;
    font-size: 14px;
}

.tab-close {
    width: 12px;
}

.tab-new {
    width: 52px;
}

.window-controls {
    display: flex;
    margin-left: auto;
}

.window-controls button {
    width: 57px;
    height: 48px;
}

.toolbar {
    display: flex;
    align-items: center;
    height: 59px;
    padding: 0 5px;
    border-radius: 12px 12px 0 0;
    background-color: #3c3c3c;
}

.tool {
    width: 45px;
    height: 42px;
}

.omnibox {
    flex: 1;
    display: flex;
    align-items: center;
    height: 42px;
    margin: 0 10px;
    padding: 0 10px 0 6px;
    border-radius: 21px;
    background-color: #282828;
}

.omnibox .tool {
    width: 40px;
}

.site-info {
    width: 30px;
    height: 30px;
    border-radius: 50%;
    background-color: #3c3c3c;
}

.url {
    flex: 1;
    margin-left: 11px;
    padding: 0;
    border: none;
    outline: none;
    background: none;
    color: #d4d4d4;
    font: 16px 'Open Sans', sans-serif;
}

/* page */
.page {
    flex: 1;
    min-height: 0;
    display: flex;
    overflow: hidden;
}

.sidebar {
    width: 317px;
    padding: 20px;
    background: linear-gradient(#667eea, #764ba2);
    color: #fff;
    font-size: 19px;
}

.brand {
    display: flex;
    align-items: center;
    justify-content: center;
    gap: 16px;
    height: 36px;
    font-size: 28px;
}

.welcome {
    margin: 14px 0 35px;
    color: rgba(255, 255, 255, 0.5);
    font-size: 17px;
    line-height: 24px;
    text-align: center;
}

nav {
    display: flex;
    flex-direction: column;
    gap: 5px;
}

.nav-link {
    display: flex;
    align-items: center;
    gap: 14px;
    height: 50px;
    padding: 0 20px;
    border-radius: 10px;
    color: rgba(255, 255, 255, 0.8);
    text-decoration: none;
}

.nav-link.active {
    margin: 0 -6px 0 6px;
    background-color: rgba(255, 255, 255, 0.2);
    color: #fff;
}

.sidebar hr {
    margin: 22px 0 20px;
    border: none;
    border-top: 1px solid rgba(255, 255, 255, 0.15);
}

.logout {
    width: 100%;
    height: 47px;
    gap: 15px;
    border: 1px solid #fff;
    border-radius: 7px;
}

.main {
    flex: 1;
    padding: 25px 40px 0;
    background-color: #fafbfd;
    overflow: hidden;
}

.content {
    min-height: 100%;
    padding: 25px;
    border-radius: 20px;
    background-color: #fff;
    box-shadow: 0 0 40px rgba(0, 0, 0, 0.08);
    color: #212529;
}

.content-head {
    display: flex;
    align-items: center;
    justify-content: space-between;
    height: 36px;
    margin-bottom: 30px;
}

.content-head h1 {
    font-size: 28px;
}

.date {
    display: flex;
    align-items: center;
    gap: 14px;
    color: #595e66;
    font-size: 21px;
}

.stats {
    display: grid;
    grid-template-columns: repeat(4, 1fr);
    gap: 30px;
    margin-bottom: 60px;
}

.stat {
    display: flex;
    align-items: center;
    justify-content: space-between;
    padding: 20px;
    border-radius: 18px;
    color: #fff;
}

.stat h2 {
    font-size: 19px;
    line-height: 26px;
}

.stat p {
    margin-top: 12px;
    font-size: 33px;
    line-height: 38px;
}

.blue {
    background-color: #0d6efd;
}

.green {
    background-color: #198754;
}

.cyan {
    background-color: #0dcaf0;
}

.yellow {
    background-color: #ffc107;
}

.chart-card {
    border: 1px solid #d0d1d2;
    border-radius: 8px;
    overflow: hidden;
}

.chart-title {
    padding: 2px 20px 0;
    border-bottom: 1px solid #d0d1d2;
    background-color: #f7f7f7;
    font-size: 23px;
    line-height: 48px;
}

.chart {
    padding: 29px 25px 30px 20px;
    color: #666;
    font: 15px 'Liberation Sans', sans-serif;
}

.legend {
    display: flex;
    align-items: center;
    justify-content: center;
    gap: 6px;
    height: 20px;
    margin-bottom: 10px;
}

.legend-box {
    width: 54px;
    height: 18px;
    border: 3px solid #4bc0c0;
    background-color: #dbf2f2;
}

.plot-row {
    display: flex;
    gap: 7px;
}

.y-labels {
    width: 24px;
    margin: -21px 0;
    line-height: 42px;
    text-align: right;
}

.y-labels span {
    display: block;
}

.plot {
    flex: 1;
    height: 421px;
    padding-left: 7px;
    background: repeating-linear-gradient(#e5e5e5 0 1px, transparent 1px 42px);
}

.plot-area {
    height: 100%;
    border-left: 1px solid #e5e5e5;
    border-bottom: 1px solid #cfcfcf;
}

.scrollbar {
    display: flex;
    flex-direction: column;
    align-items: center;
    width: 19px;
    padding: 8px 0 4px;
    background-color: #2b2b2b;
}

.thumb-track {
    flex: 1;
    padding-top: 8px;
}

.thumb {
    width: 11px;
    height: 59%;
    border-radius: 6px;
    background-color: #9f9f9f;
}

/* taskbar */
.taskbar {
    display: flex;
    height: 101px;
    border-top: 1px solid #000;
    border-right: 10px solid #000;
    background: linear-gradient(90deg, #d0eaf7, #d9f1f9 50%, #cfebfa);
    color: #fff;
    font-family: 'Open Sans', 'DejaVu Sans', sans-serif;
}

.start {
    width: 60px;
    margin-right: 3px;
}

.apps {
    display: grid;
    grid-template-columns: repeat(25, 62px);
    grid-template-rows: 50px 50px;
}

.app {
    position: relative;
    padding-bottom: 2px;
}

.app svg {
    width: 30px;
    height: 30px;
}

.app.open::after,
.app.current::after {
    content: "";
    position: absolute;
    bottom: 0;
    left: 6px;
    right: 5px;
    height: 3px;
    background-color: #e8a0ab;
}

.app.more::after {
    border-right: 11px solid #b97b86;
}

.app.current {
    background-color: #333;
}

.app.current::after {
    left: 0;
    right: 0;
}

.icon-text {
    fill: #fff;
    font-family: 'Open Sans', sans-serif;
    font-weight: 700;
    text-anchor: middle;
}

.ps {
    fill: #38a9fb;
}

.tool-text {
    fill: #45b0dc;
    font-size: 6px;
}

.badge {
    position: absolute;
    right: 6px;
    bottom: 6px;
    width: 20px;
    height: 20px;
    border-radius: 50%;
    background-color: #5f6669;
    color: #fff;
    font-size: 14px;
    font-weight: 600;
    line-height: 20px;
    text-align: center;
}

.tray {
    flex: 1;
    display: flex;
    align-items: center;
}

.chevron {
    width: 45px;
    padding-left: 10px;
}

.tray-icons {
    display: grid;
    grid-template-columns: 30px 30px;
    grid-template-rows: 50px 50px;
    place-items: center;
}

.lang {
    width: 42px;
    font-size: 15px;
    text-align: center;
}

.clock {
    flex: 1;
    display: flex;
    flex-direction: column;
    font-size: 14px;
    line-height: 30px;
    text-align: center;
}

.notifications {
    position: relative;
    width: 54px;
    height: 100%;
    padding-right: 8px;
}

.notifications .badge {
    right: 12px;
    bottom: 32px;
}

.watermark {
    position: absolute;
    left: 50%;
    bottom: 20px;
    transform: translateX(-50%);
    color: rgba(190, 190, 190, 0.5);
    font-weight: 700;
    pointer-events: none;
}

.watermark span {
    display: block;
    text-align: center;
}

.wm-arabic {
    font-family: 'DejaVu Sans', sans-serif;
    font-size: 70px;
    line-height: 70px;
}

.wm-latin {
    font-family: 'Liberation Sans', sans-serif;
    font-size: 37px;
    line-height: 42px;
}
```
